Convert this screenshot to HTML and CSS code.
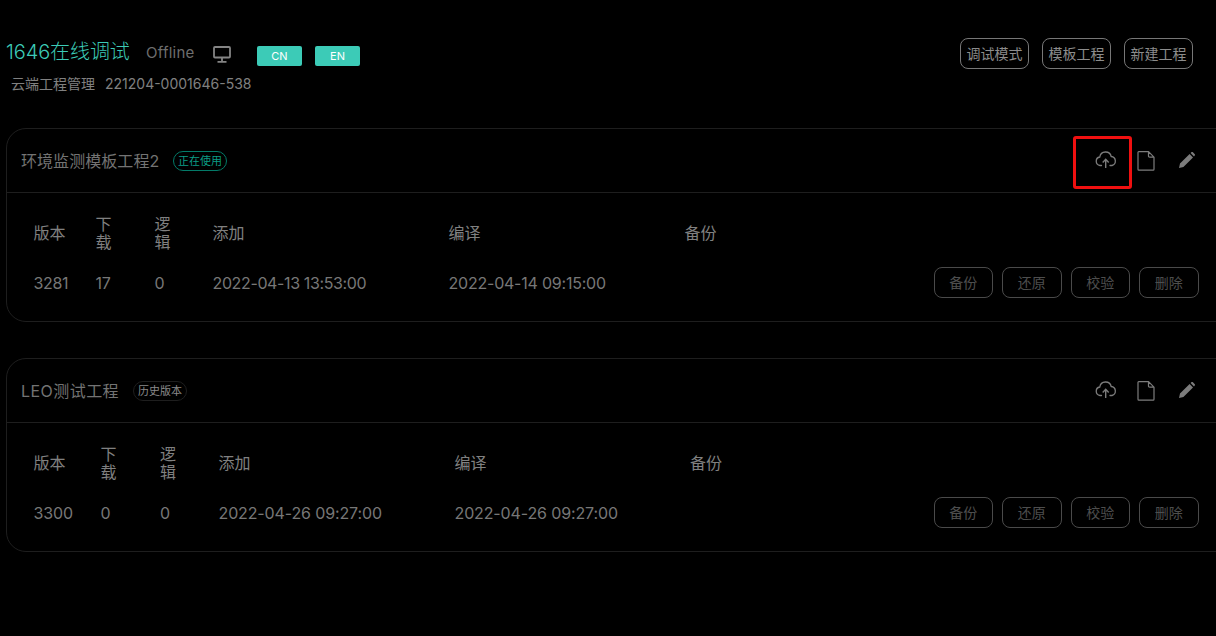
FILE: index.html
```html
<!DOCTYPE html>
<html lang="zh">
<head>
<meta charset="utf-8">
<title>1646在线调试</title>
<link rel="stylesheet" href="styles.css">
</head>
<body>
<svg class="defs" width="0" height="0" aria-hidden="true">
  <symbol id="i-cloud" viewBox="0 0 22 18">
    <path d="M6.500 15.500H5A4.300 4.300 0 0 1 4.800 7 5.800 5.800 0 0 1 16.200 6.500 4.600 4.600 0 0 1 17 15.500H15" fill="none" stroke="currentColor" stroke-width="1.300" stroke-linecap="round"/>
    <path d="M10.700 18V9.500M7.700 12.400 10.700 9.200 13.700 12.400" fill="none" stroke="currentColor" stroke-width="1.400"/>
  </symbol>
  <symbol id="i-file" viewBox="0 0 18 20">
    <path d="M1 1.500Q1 .7 1.800 .7H11.500L17 6.200V18.300Q17 19.200 16.200 19.200H1.800Q1 19.200 1 18.300ZM11.500 .7V5Q11.500 6.200 12.700 6.200H17" fill="none" stroke="currentColor" stroke-width="1.200"/>
  </symbol>
  <symbol id="i-pen" viewBox="0 0 16 16">
    <path d="M0 16 1 11.600 10.600 2 14 5.400 4.400 15ZM11.600 1 12.600 0Q13.200-.3 13.700 .1L15.800 2.200Q16.200 2.800 15.900 3.300L15 4.400Z" fill="currentColor"/>
  </symbol>
</svg>
<div class="page">
  <header class="top">
    <div class="top-left">
      <div class="title-row">
        <h1 class="title">1646在线调试</h1>
        <span class="status">Offline</span>
        <svg class="monitor" viewBox="0 0 18 17" width="18" height="17"><path d="M2 1H16Q17 1 17 2V10.500Q17 11.500 16 11.500H2Q1 11.500 1 10.500V2Q1 1 2 1Z" fill="none" stroke="currentColor" stroke-width="1.800"/><path d="M9 12V15M4.500 15.800H13.500" stroke="currentColor" stroke-width="1.800" fill="none"/></svg>
        <div class="langs"><button class="lang">CN</button><button class="lang">EN</button></div>
      </div>
      <div class="sub"><span>云端工程管理</span><span>221204-0001646-538</span></div>
    </div>
    <div class="top-actions">
      <button class="outline">调试模式</button>
      <button class="outline">模板工程</button>
      <button class="outline">新建工程</button>
    </div>
  </header>

  <section class="card">
    <div class="card-head">
      <span class="name">环境监测模板工程2</span>
      <span class="tag tag-on">正在使用</span>
      <div class="tools">
        <svg class="t-cloud"><use href="#i-cloud"/></svg>
        <svg class="t-file"><use href="#i-file"/></svg>
        <svg class="t-pen"><use href="#i-pen"/></svg>
      </div>
    </div>
    <div class="grid cols-a">
      <div class="th">版本</div><div class="th">下<br>载</div><div class="th">逻<br>辑</div><div class="th">添加</div><div class="th">编译</div><div class="th wide">备份</div>
      <div class="td">3281</div><div class="td">17</div><div class="td">0</div><div class="td">2022-04-13 13:53:00</div><div class="td td-loose">2022-04-14 09:15:00</div>
      <div class="ops"><button class="op">备份</button><button class="op">还原</button><button class="op">校验</button><button class="op">删除</button></div>
    </div>
  </section>

  <section class="card">
    <div class="card-head">
      <span class="name name-latin">LEO测试工程</span>
      <span class="tag tag-old">历史版本</span>
      <div class="tools">
        <svg class="t-cloud"><use href="#i-cloud"/></svg>
        <svg class="t-file"><use href="#i-file"/></svg>
        <svg class="t-pen"><use href="#i-pen"/></svg>
      </div>
    </div>
    <div class="grid cols-b">
      <div class="th">版本</div><div class="th">下<br>载</div><div class="th">逻<br>辑</div><div class="th">添加</div><div class="th">编译</div><div class="th wide">备份</div>
      <div class="td">3300</div><div class="td">0</div><div class="td">0</div><div class="td">2022-04-26 09:27:00</div><div class="td">2022-04-26 09:27:00</div>
      <div class="ops"><button class="op">备份</button><button class="op">还原</button><button class="op">校验</button><button class="op">删除</button></div>
    </div>
  </section>
  <div class="highlight"></div>
</div>
</body>
</html>
```
FILE: styles.css
```css
* { box-sizing: border-box; }
html, body { margin: 0; height: 100%; }
body {
  background: #000;
  color: #808080;
  font-family: Inter, "Noto Sans CJK SC", sans-serif;
  overflow: hidden;
}
.defs { position: absolute; }
.page { position: relative; height: 636px; padding: 38px 0 0 6px; width: 1216px; }
button { font-family: inherit; background: none; padding: 0; margin: 0; cursor: pointer; }

.top { display: flex; justify-content: space-between; height: 90px; padding-right: 23px; }
.title-row { display: flex; align-items: center; height: 30px; }
.title { margin: -2px 0 0; font-size: 20px; font-weight: 300; color: #3ccbb7; width: 140px; line-height: 30px; letter-spacing: -0.1px; white-space: nowrap; }
.status { font-size: 15px; width: 67px; color: #6e6e6e; letter-spacing: .25px; margin-top: -1px; }
.monitor { color: #848484; display: block; margin-top: 2px; }
.langs { display: flex; gap: 13px; margin-left: 26px; margin-top: 6px; }
.lang { width: 45px; height: 20px; border: 0; border-radius: 2px; background: #3ccbb7; color: #fff; font-size: 11px; line-height: 20px; }
.sub { display: flex; gap: 10px; margin: 6px 0 0 5px; font-size: 14px; line-height: 20px; color: #808080; white-space: nowrap; }
.top-actions { display: flex; gap: 13px; align-items: flex-start; }
.outline { height: 31px; width: 69px; border: 1px solid #777; border-radius: 8px; color: #8c8c8c; font-size: 14px; padding-bottom: 2px; white-space: nowrap; }

.card { width: 1240px; height: 194px; border: 1px solid #1e1e1e; border-radius: 20px; margin-bottom: 36px; }
.card-head { position: relative; display: flex; align-items: center; height: 64px; padding: 0 0 1px 14px; border-bottom: 1px solid #1e1e1e; }
.name { font-size: 16px; color: #737373; width: 152px; white-space: nowrap; letter-spacing: .06px; }
.name-latin { letter-spacing: .45px; }
.tag { display: block; font-size: 11px; line-height: 18px; height: 20px; width: 54px; text-align: center; border-radius: 10px; margin-top: 2px; }
.tag-on { border: 1px solid #037a68; color: #0c9c86; }
.tag-old { border: 1px solid #1e1e1e; color: #8a8a8a; margin-left: -40px; }
.tools { position: absolute; left: 1088px; top: 0; height: 63px; width: 110px; }
.tools svg { position: absolute; color: #7c7c7c; }
.t-cloud { left: 0; top: 21px; width: 22px; height: 18px; }
.t-file { left: 42px; top: 22px; width: 18px; height: 20px; }
.t-pen { left: 84px; top: 23px; width: 16px; height: 16px; color: #707070; }

.grid { display: grid; padding-left: 26.500px; grid-template-rows: 36px 31px; row-gap: 15px; padding-top: 22px; align-items: center; }
.grid .td { position: relative; top: 1px; }
.cols-a { grid-template-columns: 62px 59px 58px 236px 236px 514px; }
.cols-b { grid-template-columns: 67px 59.500px 58.500px 236px 235.500px 508.500px; }
.th { font-size: 16px; line-height: 18px; color: #808080; }
.td { font-size: 16px; color: #777; white-space: nowrap; letter-spacing: -.37px; }
.td-loose { letter-spacing: -.22px; }
.cols-b .td { letter-spacing: -.13px; }
.ops { display: flex; gap: 9px; grid-column: 6; grid-row: 2; justify-content: flex-end; margin-top: 1px; }
.op { width: 59.500px; height: 31px; border: 1px solid #4a4a4a; border-radius: 8px; color: #4e4e4e; font-size: 14px; }

.highlight { position: absolute; left: 1073px; top: 136px; width: 59px; height: 53px; border: 3px solid #f01010; border-radius: 3px; }
```
